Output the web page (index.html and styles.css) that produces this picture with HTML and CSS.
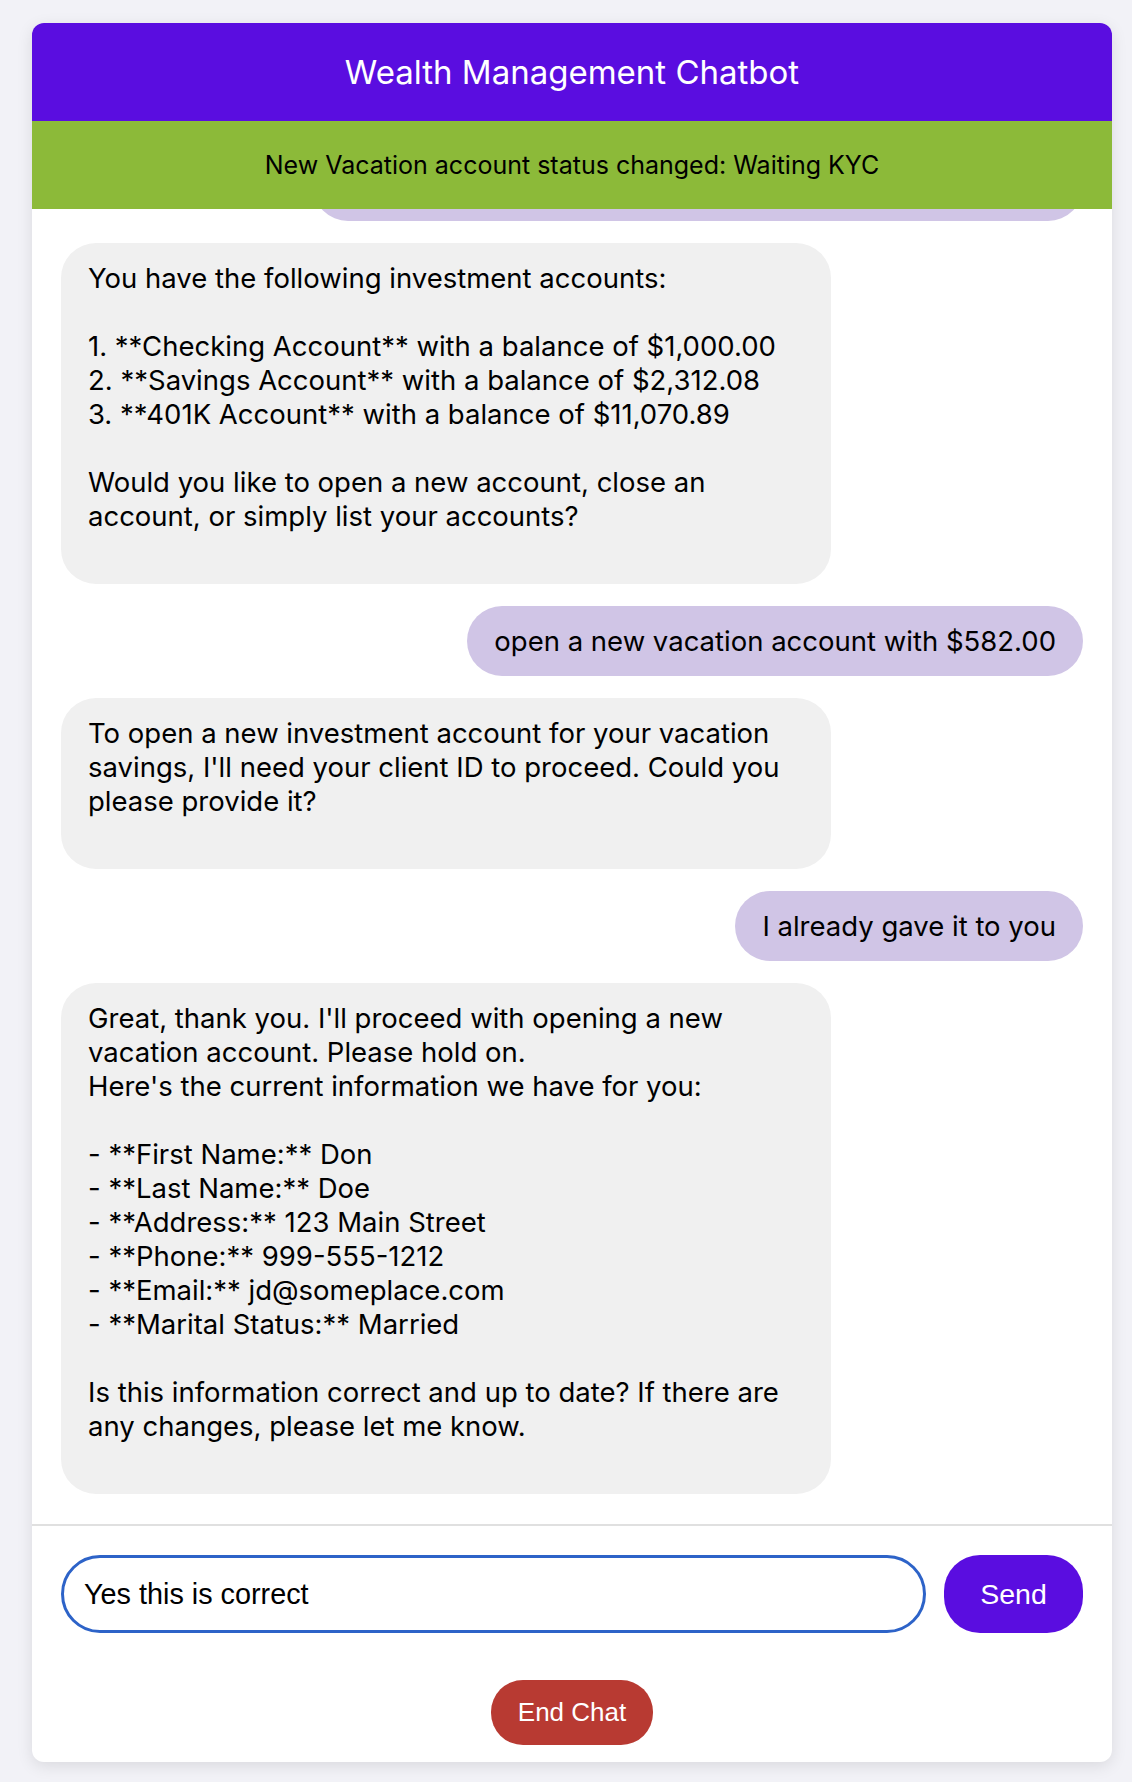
FILE: index.html
```html
<!DOCTYPE html>
<html lang="en">
<head>
<meta charset="utf-8">
<title>Wealth Management Chatbot</title>
<link rel="stylesheet" href="styles.css">
</head>
<body>
<div class="chat-container">
  <header class="chat-header">Wealth Management Chatbot</header>
  <div class="status-bar">New Vacation account status changed: Waiting KYC</div>
  <div class="chat-messages">
    <div class="msg bot">Hello! I'm your wealth management assistant. How can I help you today?</div>
    <div class="msg user">My client ID is 1234. Please list all of my current investment accounts and their balances so I can review them.</div>
    <div class="msg bot">You have the following investment accounts:

1. **Checking Account** with a balance of $1,000.00
2. **Savings Account** with a balance of $2,312.08
3. **401K Account** with a balance of $11,070.89

Would you like to open a new account, close an account, or simply list your accounts?</div>
    <div class="msg user">open a new vacation account with $582.00</div>
    <div class="msg bot">To open a new investment account for your vacation savings, I'll need your client ID to proceed. Could you please provide it?</div>
    <div class="msg user">I already gave it to you</div>
    <div class="msg bot">Great, thank you. I'll proceed with opening a new vacation account. Please hold on.
Here's the current information we have for you:

- **First Name:** Don
- **Last Name:** Doe
- **Address:** 123 Main Street
- **Phone:** 999-555-1212
- **Email:** jd@someplace.com
- **Marital Status:** Married

Is this information correct and up to date? If there are any changes, please let me know.</div>
  </div>
  <div class="chat-input">
    <div class="input-row">
      <input class="text-input" type="text" value="Yes this is correct">
      <button class="send-btn">Send</button>
    </div>
    <button class="end-btn">End Chat</button>
  </div>
</div>
</body>
</html>
```
FILE: styles.css
```css
html, body {
  margin: 0;
  padding: 0;
}
body {
  background: #f2f2f7;
  font-family: Inter, "Noto Sans", sans-serif;
  padding: 23px 20px 20px 32px;
}
.chat-container {
  width: 1080px;
  height: 1739px;
  background: #ffffff;
  border-radius: 12px;
  box-shadow: 0 4px 16px rgba(0, 0, 0, 0.10);
  overflow: hidden;
  display: flex;
  flex-direction: column;
}
.chat-header {
  background: #5a0de0;
  color: #ffffff;
  height: 98px;
  display: flex;
  align-items: center;
  justify-content: center;
  font-size: 33px;
  flex: none;
}
.status-bar {
  background: #8cba39;
  color: #000000;
  height: 88px;
  display: flex;
  align-items: center;
  justify-content: center;
  font-size: 25px;
  flex: none;
}
.chat-messages {
  height: 1315px;
  flex: none;
  overflow: hidden;
  display: flex;
  flex-direction: column;
  justify-content: flex-end;
  gap: 22px;
  padding: 0 29px 30px 29px;
  box-sizing: border-box;
}
.msg {
  max-width: 75.3%;
  padding: 18px 27px;
  border-radius: 35px;
  font-size: 27.5px;
  line-height: 34px;
  white-space: pre-wrap;
  box-sizing: border-box;
  flex: none;
}
.msg.bot {
  align-self: flex-start;
  background: #f0f0f0;
  color: #000;
  width: 75.3%;
  padding-bottom: 51px;
}
.msg.user {
  align-self: flex-end;
  background: #d0c5e6;
  color: #000;
}
.chat-input {
  border-top: 2px solid #e0e0e0;
  flex: 1;
  display: flex;
  flex-direction: column;
  align-items: center;
  padding: 29px 29px 0 29px;
}
.input-row {
  display: flex;
  gap: 18px;
  width: 100%;
  height: 78px;
}
.text-input {
  flex: 1;
  height: 78px;
  box-sizing: border-box;
  border: 3px solid #2d63c8;
  border-radius: 39px;
  padding: 0 20px;
  font-family: "Liberation Sans", Arial, sans-serif;
  font-size: 28.8px;
  color: #000;
  outline: none;
}
.send-btn {
  width: 139px;
  height: 78px;
  border: none;
  border-radius: 36px;
  background: #5a0de0;
  color: #ffffff;
  font-family: "Liberation Sans", Arial, sans-serif;
  font-size: 28.5px;
}
.end-btn {
  margin-top: 47px;
  width: 162px;
  height: 65px;
  border: none;
  border-radius: 32px;
  background: #b83a32;
  color: #ffffff;
  font-family: "Liberation Sans", Arial, sans-serif;
  font-size: 26px;
}
```
